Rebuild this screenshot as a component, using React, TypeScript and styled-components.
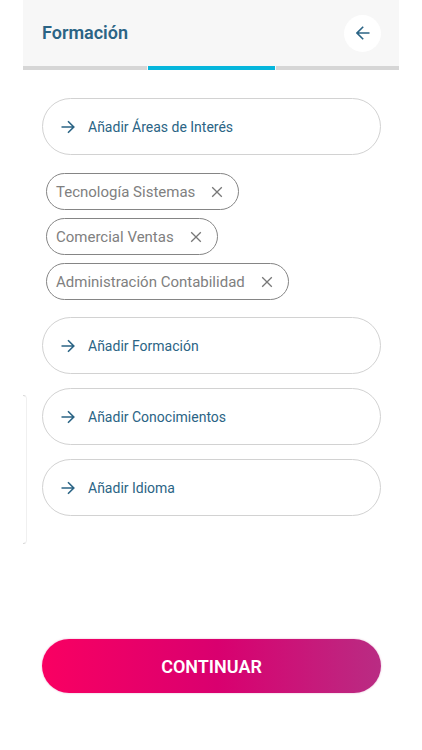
import React from "react";
import styled, { createGlobalStyle } from "styled-components";

const GlobalStyle = createGlobalStyle`
  *, *::before, *::after { box-sizing: border-box; }
  body { margin: 0; background: #fff; font-family: Roboto, "Liberation Sans", sans-serif; }
  button { font-family: inherit; cursor: pointer; }
`;

const Screen = styled.div`
  position: relative;
  margin: 0 23px;
  min-height: 100vh;
  display: flex;
  flex-direction: column;
  background: #fff;
`;

const Header = styled.header`
  display: flex;
  align-items: center;
  justify-content: space-between;
  height: 66px;
  padding: 0 18px 0 19px;
  background: #f7f7f7;
`;

const Title = styled.h1`
  margin: 0;
  font-size: 18px;
  line-height: 24px;
  font-weight: 600;
  color: #2b6485;
`;

const BackButton = styled.button`
  display: flex;
  align-items: center;
  justify-content: center;
  width: 37px;
  height: 37px;
  padding: 0;
  border: 0;
  border-radius: 50%;
  background: #fff;
  color: #2b6485;
`;

const Steps = styled.div`
  display: grid;
  grid-template-columns: 1fr 127px 1fr;
  gap: 1px;
  background: #f7f7f7;
`;

const Step = styled.span<{ $active?: boolean }>`
  height: 4px;
  background: ${(p) => (p.$active ? "#06b6dc" : "#d6d6d6")};
`;

const Content = styled.main`
  display: flex;
  flex-direction: column;
  gap: 14px;
  padding: 28px 18px 0 19px;
`;

const AddButton = styled.button`
  display: flex;
  align-items: center;
  gap: 13px;
  height: 57px;
  padding: 0 18px;
  border: 1px solid #d2d2d2;
  border-radius: 29px;
  background: #fff;
  color: #2b6485;
  font-size: 14px;
  line-height: 20px;
`;

const Chips = styled.ul`
  display: flex;
  flex-direction: column;
  align-items: flex-start;
  gap: 8px;
  margin: 4px 0 3px;
  padding: 0 4px;
  list-style: none;
`;

const Chip = styled.li`
  display: flex;
  align-items: center;
  gap: 16px;
  height: 37px;
  padding: 0 15px 0 9px;
  border: 1px solid #858585;
  border-radius: 19px;
  color: #808080;
  font-size: 15px;
  line-height: 20px;
`;

const RemoveButton = styled.button`
  display: flex;
  padding: 0;
  border: 0;
  background: none;
  color: #777;
`;

const Footer = styled.footer`
  margin-top: auto;
  padding: 0 18px 57px 19px;
`;

const ContinueButton = styled.button`
  width: 100%;
  height: 54px;
  padding: 2px 0 0;
  border: 0;
  border-radius: 27px;
  background: linear-gradient(90deg, #f90062 0%, #d9006f 52%, #b92c83 100%);
  box-shadow: 0 0 2px rgba(185, 44, 131, 0.4);
  color: #fff;
  font-size: 18px;
  line-height: 24px;
  font-weight: 600;
`;

const PreviousCard = styled.div`
  position: absolute;
  top: 395px;
  left: 0;
  width: 4px;
  height: 149px;
  border: 1px solid #d8d8d8;
  border-right-color: #f0f0f0;
  border-left: 0;
  border-radius: 0 4px 4px 0;
`;

const Arrow = ({ back }: { back?: boolean }) => (
  <svg width="14" height="14" viewBox="0 0 14 14" fill="none" stroke="currentColor" strokeWidth="1.6" aria-hidden="true">
    <path d={back ? "M13.5 7H1.2M7.2 .8L1 7l6.2 6.2" : "M.5 7h12M7 1.2L12.8 7 7 12.8"} />
  </svg>
);

const Cross = () => (
  <svg width="12" height="12" viewBox="0 0 12 12" fill="none" stroke="currentColor" strokeWidth="1.3" aria-hidden="true">
    <path d="M1.2 1.2l9.6 9.6M10.8 1.2l-9.6 9.6" />
  </svg>
);

const AddRow = ({ label }: { label: string }) => (
  <AddButton type="button">
    <Arrow />
    {label}
  </AddButton>
);

const initialAreas = ["Tecnología Sistemas", "Comercial Ventas", "Administración Contabilidad"];

export default function App() {
  const [areas, setAreas] = React.useState(initialAreas);
  return (
    <>
      <GlobalStyle />
      <Screen>
        <Header>
          <Title>Formación</Title>
          <BackButton type="button" aria-label="Volver">
            <Arrow back />
          </BackButton>
        </Header>
        <Steps>
          <Step />
          <Step $active />
          <Step />
        </Steps>
        <Content>
          <AddRow label="Añadir Áreas de Interés" />
          <Chips>
            {areas.map((area) => (
              <Chip key={area}>
                {area}
                <RemoveButton
                  type="button"
                  aria-label={`Quitar ${area}`}
                  onClick={() => setAreas(areas.filter((a) => a !== area))}
                >
                  <Cross />
                </RemoveButton>
              </Chip>
            ))}
          </Chips>
          <AddRow label="Añadir Formación" />
          <AddRow label="Añadir Conocimientos" />
          <AddRow label="Añadir Idioma" />
        </Content>
        <Footer>
          <ContinueButton type="button">CONTINUAR</ContinueButton>
        </Footer>
        <PreviousCard />
      </Screen>
    </>
  );
}
